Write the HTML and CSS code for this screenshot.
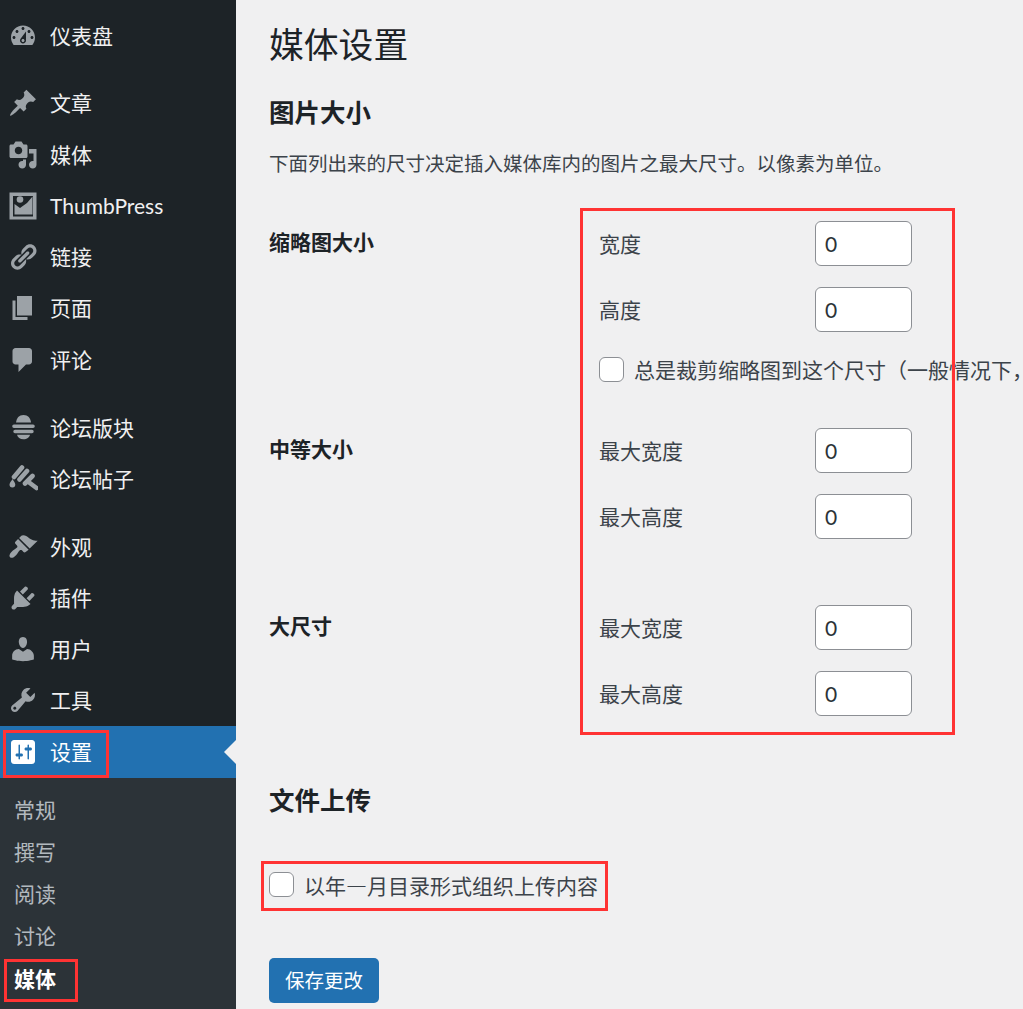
FILE: index.html
```html
<!DOCTYPE html>
<html lang="zh-CN">
<head>
<meta charset="utf-8">
<title>媒体设置</title>
<link rel="stylesheet" href="styles.css">
</head>
<body>
<div class="shell">
  <nav class="sidebar">
    <ul class="menu">
      <li class="item"><svg class="icon" viewBox="0 0 20 20"><path fill-rule="evenodd" d="M3.76 16h12.48c1.1-1.37 1.76-3.11 1.76-5 0-4.42-3.58-8-8-8s-8 3.58-8 8c0 1.89.66 3.63 1.76 5zM10 4c.55 0 1 .45 1 1s-.45 1-1 1-1-.45-1-1 .45-1 1-1zM6 6c.55 0 1 .45 1 1s-.45 1-1 1-1-.45-1-1 .45-1 1-1zm8 0c.55 0 1 .45 1 1s-.45 1-1 1-1-.45-1-1 .45-1 1-1zm-5.37 5.55L12 7v6c0 1.1-.9 2-2 2s-2-.9-2-2c0-.57.24-1.08.63-1.45zM4 10c.55 0 1 .45 1 1s-.45 1-1 1-1-.45-1-1 .45-1 1-1zm12 0c.55 0 1 .45 1 1s-.45 1-1 1-1-.45-1-1 .45-1 1-1zm-5 3c0-.55-.45-1-1-1s-1 .45-1 1 .45 1 1 1 1-.45 1-1z"/></svg><span>仪表盘</span></li>
      <li class="item sep"><svg class="icon" viewBox="0 0 20 20"><path d="M10.44 3.02l1.82-1.82 6.36 6.35-1.83 1.82c-1.05-.68-2.48-.57-3.41.36l-.75.75c-.92.93-1.04 2.35-.35 3.41l-1.83 1.82-2.41-2.41-2.8 2.79c-.42.42-3.38 2.71-3.8 2.29s1.86-3.39 2.28-3.81l2.79-2.79L4.1 9.36l1.83-1.82c1.05.69 2.48.57 3.4-.36l.75-.75c.93-.92 1.05-2.35.36-3.41z"/></svg><span>文章</span></li>
      <li class="item"><svg class="icon" viewBox="0 0 20 20"><path fill-rule="evenodd" d="M13 11V4c0-.55-.45-1-1-1h-1.67L9 1H5L3.67 3H2c-.55 0-1 .45-1 1v7c0 .55.45 1 1 1h10c.55 0 1-.45 1-1zM7 4.5c1.38 0 2.5 1.12 2.5 2.5S8.38 9.5 7 9.5 4.5 8.38 4.5 7 5.62 4.5 7 4.5zM14 6h5v10.5c0 1.38-1.12 2.5-2.5 2.5S14 17.88 14 16.5s1.12-2.5 2.5-2.5c.17 0 .34.02.5.05V9h-3V6zm-4 8.05V13h2v3.5c0 1.38-1.12 2.5-2.5 2.5S7 17.88 7 16.5 8.12 14 9.5 14c.17 0 .34.02.5.05z"/></svg><span>媒体</span></li>
      <li class="item"><svg class="icon" viewBox="0 0 30 30"><path fill-rule="evenodd" d="M1.500 1.500h27v27h-27zM5 5v20.500h20V5z"/><path d="M6.500 13l5.500 4 7-5 5.500-6.500v18h-18z"/><circle cx="12" cy="8.500" r="3.300"/></svg><span>ThumbPress</span></li>
      <li class="item"><svg class="icon" viewBox="0 0 20 20"><path d="M17.74 2.76c1.68 1.69 1.68 4.41 0 6.1l-1.53 1.52c-1.12 1.12-2.7 1.47-4.14 1.09l2.62-2.61.76-.77.76-.76c.84-.84.84-2.2 0-3.04-.84-.85-2.2-.85-3.04 0l-.77.76-3.38 3.38c-.37-1.44-.02-3.02 1.1-4.14l1.52-1.53c1.69-1.68 4.42-1.68 6.1 0zM8.59 13.43l5.34-5.34c.42-.42.42-1.1 0-1.52-.44-.43-1.13-.39-1.53 0l-5.33 5.34c-.42.42-.42 1.1 0 1.52.44.43 1.13.39 1.52 0zm-.76 2.29l4.14-4.15c.38 1.44.03 3.02-1.09 4.14l-1.52 1.53c-1.69 1.68-4.41 1.68-6.1 0-1.68-1.68-1.68-4.42 0-6.1l1.53-1.52c1.12-1.12 2.7-1.47 4.14-1.1l-4.14 4.15c-.85.84-.85 2.2 0 3.05.84.84 2.2.84 3.04 0z"/></svg><span>链接</span></li>
      <li class="item"><svg class="icon" viewBox="0 0 20 20"><path d="M6 15V2h10v13H6zm-1 1h8v2H3V5h2v11z"/></svg><span>页面</span></li>
      <li class="item"><svg class="icon" viewBox="0 0 20 20"><path d="M5 2h9c1.1 0 2 .9 2 2v7c0 1.1-.9 2-2 2h-2l-5 5v-5H5c-1.1 0-2-.9-2-2V4c0-1.100.9-2 2-2z"/></svg><span>评论</span></li>
      <li class="item sep"><svg class="icon" viewBox="0 0 30 30"><path d="M8 9.500C8.500 5 11 2 15.500 2S22.500 5 23 9.500z"/><path d="M6 11.500h19a1.800 1.800 0 0 1 0 3.600H6a1.800 1.800 0 0 1 0-3.600zM7 16.800h17a1.700 1.700 0 0 1 0 3.400H7a1.700 1.700 0 0 1 0-3.400zM9 21.800h13c-.5 2.500-3 4.500-6.500 4.500S9.500 24.300 9 21.800z"/></svg><span>论坛版块</span></li>
      <li class="item"><svg class="icon" viewBox="0 0 30 30"><path class="ln" d="M6 13L14 3.500M11.500 15.500L19 7M17 19.500L24.500 12M20.500 18L28.500 24"/><path d="M4.500 15c1 2 2.800 3.700 2.800 5.500a2.900 2.900 0 0 1-5.800 0c0-1.800 2-3.500 3-5.500z"/></svg><span>论坛帖子</span></li>
      <li class="item sep"><svg class="icon" viewBox="0 0 20 20"><path d="M14.480 11.060L7.410 3.990l1.500-1.500c.5-.56 2.300-.47 3.510.32 1.210.8 1.430 1.280 2.910 2.100 1.180.64 2.450 1.260 4.450.85zM13.770 11.770L6.700 4.700 4.930 6.470c-.39.39-.39 1.020 0 1.410l1.060 1.060c.39.39.39 1.030 0 1.420-.6.6-1.430 1.110-2.210 1.690-.35.26-.7.53-1.010.84-1.340 1.340-2.380 2.930-1.370 3.940s2.600-.03 3.940-1.370c.31-.31.58-.66.84-1.010.58-.78 1.090-1.610 1.690-2.210.39-.39 1.020-.39 1.410 0l1.060 1.060c.39.39 1.020.39 1.410 0z"/></svg><span>外观</span></li>
      <li class="item"><svg class="icon" viewBox="0 0 20 20"><path d="M13.110 4.360L9.870 7.600 8 5.730l3.240-3.240c.35-.34 1.050-.2 1.560.32.52.51.66 1.210.31 1.550zm-8 1.770l.91-1.120 9.010 9.010-1.190.84c-.71.71-2.630 1.160-3.820 1.160H6.140L4.900 17.260c-.59.59-1.540.59-2.120 0-.59-.58-.59-1.530 0-2.120l1.240-1.240v-3.880c0-1.130.4-3.190 1.090-3.890zm7.260 3.970l3.240-3.240c.34-.35 1.040-.21 1.550.31.52.51.66 1.210.31 1.550l-3.240 3.250z"/></svg><span>插件</span></li>
      <li class="item"><svg class="icon" viewBox="0 0 20 20"><path d="M10 9.250c-2.270 0-2.730-3.440-2.730-3.440C7 4.020 7.820 2 9.970 2c2.160 0 2.980 2.020 2.710 3.810 0 0-.41 3.440-2.680 3.440zm0 2.570L12.720 10c2.390 0 4.520 2.330 4.520 4.530v2.490s-3.650 1.130-7.240 1.130c-3.650 0-7.240-1.130-7.240-1.130v-2.490c0-2.250 1.940-4.480 4.470-4.480z"/></svg><span>用户</span></li>
      <li class="item"><svg class="icon" viewBox="0 0 20 20"><path fill-rule="evenodd" d="M16.680 9.770c-1.340 1.340-3.300 1.670-4.950.99l-5.410 6.520c-.99.99-2.590.99-3.580 0s-.99-2.590 0-3.570l6.520-5.420c-.68-1.650-.35-3.610.99-4.950 1.280-1.280 3.120-1.620 4.720-1.060l-2.890 2.890 2.820 2.820 2.860-2.870c.53 1.580.18 3.390-1.080 4.650zM3.810 16.210c.4.39 1.040.39 1.430 0 .4-.4.4-1.040 0-1.430-.39-.4-1.030-.4-1.430 0-.39.39-.39 1.030 0 1.430z"/></svg><span>工具</span></li>
      <li class="item active"><svg class="icon" viewBox="0 0 20 20"><path fill-rule="evenodd" d="M18 16V4c0-1.100-.9-2-2-2H4c-1.100 0-2 .9-2 2v12c0 1.100.9 2 2 2h12c1.100 0 2-.9 2-2zM8 11h1c.55 0 1 .45 1 1s-.45 1-1 1H8v1.500c0 .28-.22.5-.5.5s-.5-.22-.5-.5V13H6c-.55 0-1-.45-1-1s.45-1 1-1h1V5.500c0-.28.22-.5.5-.5s.5.22.5.5V11zm5-2h-1c-.55 0-1-.45-1-1s.45-1 1-1h1V5.500c0-.28.22-.5.5-.5s.5.22.5.5V7h1c.55 0 1 .45 1 1s-.45 1-1 1h-1v5.500c0 .28-.22.5-.5.5s-.5-.22-.5-.5V9z"/></svg><span>设置</span></li>
    </ul>
    <ul class="submenu">
      <li>常规</li>
      <li>撰写</li>
      <li>阅读</li>
      <li>讨论</li>
      <li class="current">媒体</li>
    </ul>
  </nav>
  <main class="content">
    <h1 class="title">媒体设置</h1>
    <h2 class="section first">图片大小</h2>
    <p class="note">下面列出来的尺寸决定插入媒体库内的图片之最大尺寸。以像素为单位。</p>
    <div class="setting s-thumb">
      <div class="setting-name">缩略图大小</div>
      <div class="fields">
        <label class="field"><span class="field-label">宽度</span><input class="num" type="text" value="0"></label>
        <label class="field"><span class="field-label">高度</span><input class="num" type="text" value="0"></label>
        <label class="check crop"><input class="box" type="checkbox"><span>总是裁剪缩略图到这个尺寸（一般情况下，缩略图应该是按比例的）</span></label>
      </div>
    </div>
    <div class="setting s-medium">
      <div class="setting-name">中等大小</div>
      <div class="fields">
        <label class="field"><span class="field-label">最大宽度</span><input class="num" type="text" value="0"></label>
        <label class="field"><span class="field-label">最大高度</span><input class="num" type="text" value="0"></label>
      </div>
    </div>
    <div class="setting s-large">
      <div class="setting-name">大尺寸</div>
      <div class="fields">
        <label class="field"><span class="field-label">最大宽度</span><input class="num" type="text" value="0"></label>
        <label class="field"><span class="field-label">最大高度</span><input class="num" type="text" value="0"></label>
      </div>
    </div>
    <h2 class="section upload">文件上传</h2>
    <label class="check organize"><input class="box" type="checkbox"><span>以年—月目录形式组织上传内容</span></label>
    <button class="save" type="button">保存更改</button>
  </main>
</div>
<div class="mark mark-fields"></div>
<div class="mark mark-settings"></div>
<div class="mark mark-media"></div>
<div class="mark mark-upload"></div>
</body>
</html>
```
FILE: styles.css
```css
* { box-sizing: border-box; }
html, body { margin: 0; padding: 0; height: 1009px; overflow: hidden; }
body {
  position: relative;
  background: #f0f0f1;
  color: #3c434a;
  font-family: "Lato", "Noto Sans CJK SC", sans-serif;
  font-size: 21px;
  line-height: 30px;
}
.shell { display: flex; height: 1009px; }
.sidebar { width: 236px; flex: none; background: #1d2327; padding-top: 10px; color: #f0f0f1; }
.menu, .submenu { list-style: none; margin: 0; padding: 0; }
.item {
  position: relative;
  display: flex;
  align-items: center;
  height: 51.25px;
  padding-left: 8px;
  white-space: nowrap;
}
.item.sep { margin-top: 16.6px; }
.icon { width: 30px; height: 30px; margin-right: 12px; flex: none; fill: #9ca2a7; }
.ln { fill: none; stroke: #9ca2a7; stroke-width: 4.6; stroke-linecap: round; }
.active { height: 52px; background: #2271b1; color: #fff; }
.active .icon { fill: #fff; }
.active::after {
  content: "";
  position: absolute;
  right: 0;
  top: 14px;
  border: 12px solid transparent;
  border-right-color: #f0f0f1;
  border-left-width: 0;
}
.submenu { background: #2c3338; padding-top: 10.5px; height: 231px; color: rgba(240, 246, 252, .7); }
.submenu li { height: 42.3px; line-height: 42.3px; padding-left: 14px; }
.submenu .current { color: #fff; font-weight: 700; }
.content { flex: 1; min-width: 0; padding-left: 33px; }
.title { margin: 0; padding-top: 20px; font-size: 34.8px; line-height: 50px; font-weight: 400; color: #1d2327; }
.section { margin: 0; font-size: 25.5px; line-height: 34px; font-weight: 700; color: #1d2327; }
.section.first { margin-top: 25px; }
.note { margin: 0; padding-top: 19px; font-size: 19.5px; line-height: 32px; white-space: nowrap; }
.setting { display: flex; }
.s-thumb { margin-top: 41px; }
.s-medium { margin-top: 46px; }
.s-large { margin-top: 66px; }
.setting-name { width: 330px; flex: none; color: #1d2327; font-weight: 700; line-height: 41px; }
.fields { display: flex; flex-direction: column; gap: 21px; min-width: 0; }
.field { display: flex; align-items: center; }
.field-label { width: 216px; flex: none; padding-top: 1px; }
.num {
  width: 97px;
  height: 45px;
  padding: 0 9px;
  border: 1px solid #8c8f94;
  border-radius: 6px;
  background: #fff;
  color: #2c3338;
  font: inherit;
}
.check { display: flex; align-items: center; gap: 10px; height: 25px; white-space: nowrap; }
.crop { margin-top: 4px; }
.box {
  appearance: none;
  width: 25px;
  height: 25px;
  margin: 0;
  flex: none;
  border: 1px solid #8c8f94;
  border-radius: 6px;
  background: #fff;
}
.upload { margin-top: 67px; }
.organize { margin-top: 55px; font-family: "Noto Sans CJK SC", sans-serif; }
.save {
  display: block;
  margin-top: 61px;
  width: 110px;
  height: 45px;
  padding: 0;
  border: 0;
  border-radius: 5px;
  background: #2271b1;
  color: #fff;
  font: inherit;
  font-size: 19.5px;
}
.mark { position: absolute; border: 3px solid #ff3333; pointer-events: none; }
.mark-fields { left: 580px; top: 208px; width: 375px; height: 527px; }
.mark-settings { left: 3px; top: 730px; width: 106px; height: 48px; }
.mark-media { left: 4px; top: 959px; width: 74px; height: 43px; }
.mark-upload { left: 261px; top: 861px; width: 347px; height: 50px; }
```
